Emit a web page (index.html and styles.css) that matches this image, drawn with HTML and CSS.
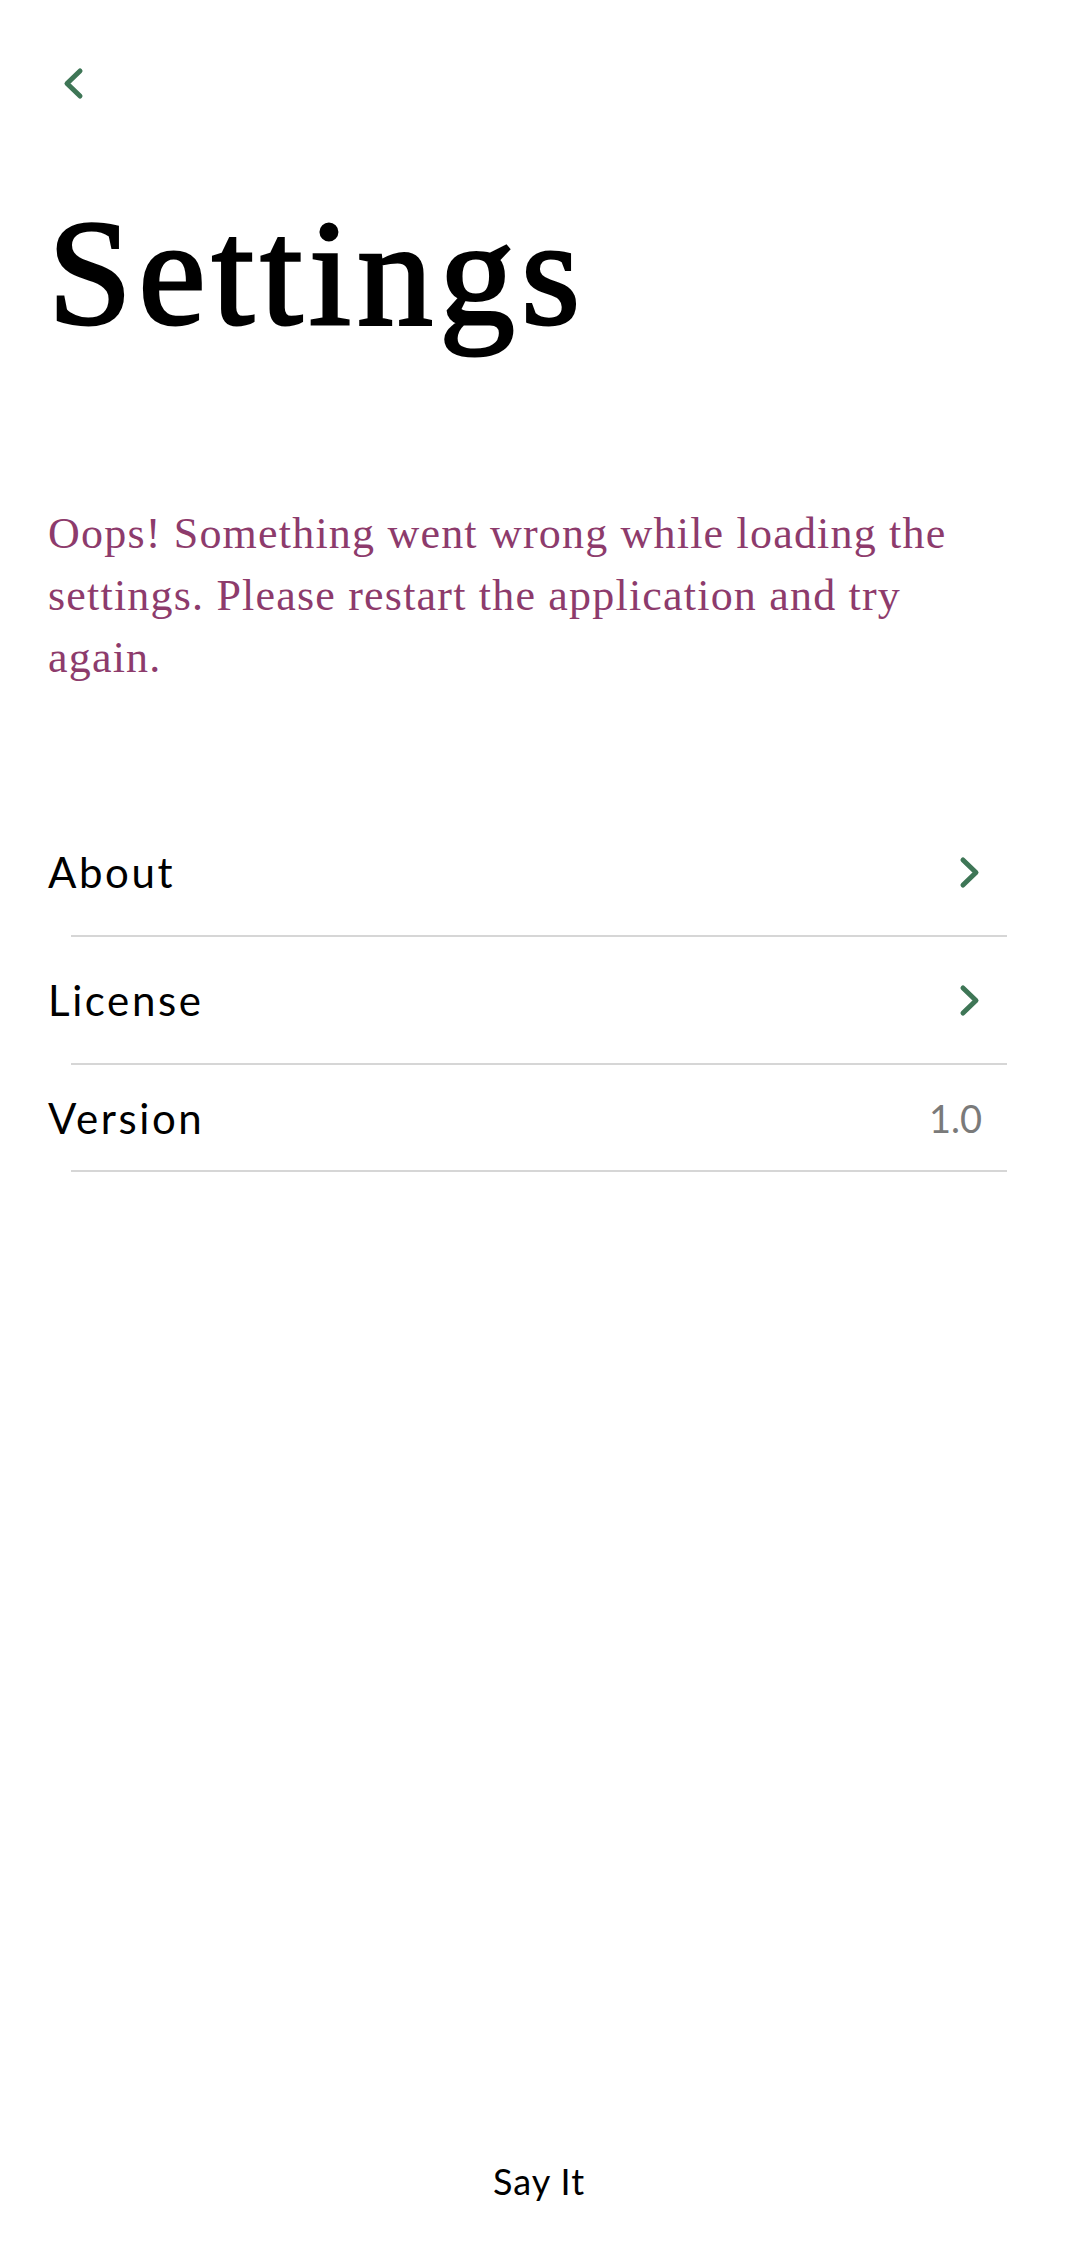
FILE: index.html
```html
<!DOCTYPE html>
<html lang="en">
<head>
<meta charset="utf-8">
<title>Settings</title>
<link rel="stylesheet" href="styles.css">
</head>
<body>
<div class="screen">
  <header class="topbar">
    <button class="back" aria-label="Back">
      <svg width="21" height="33" viewBox="0 0 21 33"><path d="M17 4 L4 16.5 L17 29" fill="none" stroke="#3e7656" stroke-width="5" stroke-linecap="round" stroke-linejoin="round"/></svg>
    </button>
  </header>
  <main class="content">
    <h1 class="title">Settings</h1>
    <p class="error">Oops! Something went wrong while loading the settings. Please restart the application and try again.</p>
    <ul class="list">
      <li class="item">
        <div class="row">
          <span class="label">About</span>
          <svg class="chev" width="21" height="33" viewBox="0 0 21 33"><path d="M4 4 L17 16.5 L4 29" fill="none" stroke="#3e7656" stroke-width="5" stroke-linecap="round" stroke-linejoin="round"/></svg>
        </div>
        <div class="divider"></div>
      </li>
      <li class="item">
        <div class="row">
          <span class="label">License</span>
          <svg class="chev" width="21" height="33" viewBox="0 0 21 33"><path d="M4 4 L17 16.5 L4 29" fill="none" stroke="#3e7656" stroke-width="5" stroke-linecap="round" stroke-linejoin="round"/></svg>
        </div>
        <div class="divider"></div>
      </li>
      <li class="item">
        <div class="row row-short">
          <span class="label">Version</span>
          <span class="value">1.0</span>
        </div>
        <div class="divider"></div>
      </li>
    </ul>
  </main>
  <footer class="footer">Say It</footer>
</div>
</body>
</html>
```
FILE: styles.css
```css
* { box-sizing: border-box; }
html, body { margin: 0; padding: 0; background: #ffffff; }
.screen {
  width: 1078px;
  height: 2252px;
  display: flex;
  flex-direction: column;
  overflow: hidden;
}
.topbar {
  height: 198px;
  padding: 67px 0 0 63px;
}
.back {
  background: none;
  border: 0;
  padding: 0;
  margin: 0;
  display: block;
  width: 21px;
  height: 33px;
}
.back svg { display: block; }
.content {
  padding: 0 71px 0 48px;
}
.title {
  margin: 0;
  font-family: "Liberation Serif", serif;
  font-weight: 400;
  font-size: 151px;
  line-height: 151px;
  letter-spacing: 6.5px;
  color: #000;
  -webkit-text-stroke: 3px #000;
}
.error {
  margin: 154px 0 0;
  font-family: "Liberation Serif", serif;
  font-size: 44px;
  line-height: 62px;
  letter-spacing: 1.2px;
  color: #8d3b6c;
  padding-right: 10px;
}
.list {
  list-style: none;
  margin: 120px 0 0;
  padding: 0;
}
.row {
  height: 126px;
  display: flex;
  align-items: center;
  justify-content: space-between;
  padding-right: 27px;
}
.row-short { height: 105px; padding-right: 25px; }
.label {
  font-family: Lato, "Noto Sans", sans-serif;
  font-size: 42px;
  letter-spacing: 2.6px;
  color: #000;
}
.value {
  font-family: Lato, "Noto Sans", sans-serif;
  font-size: 38px;
  color: #7a7a7a;
}
.chev { display: block; }
.divider {
  height: 2px;
  margin-left: 23px;
  background: #d6d6d6;
}
.footer {
  margin-top: auto;
  padding-bottom: 50px;
  text-align: center;
  font-family: Lato, "Noto Sans", sans-serif;
  font-size: 36px;
  line-height: 42px;
  letter-spacing: 1px;
  color: #000;
}
```
